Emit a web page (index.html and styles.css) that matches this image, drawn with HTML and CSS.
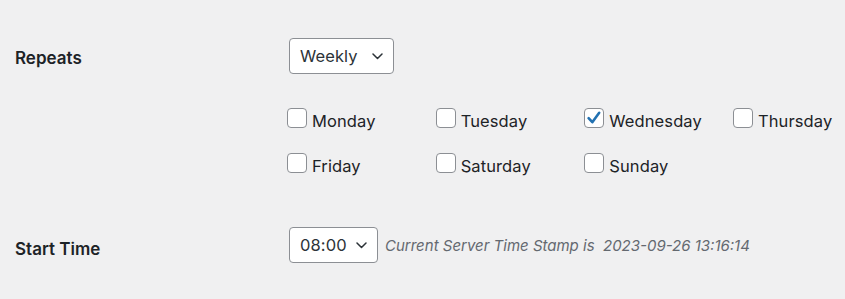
FILE: index.html
```html
<!DOCTYPE html>
<html lang="en">
<head>
<meta charset="utf-8">
<title>Schedule</title>
<link rel="stylesheet" href="styles.css">
</head>
<body>
<div class="form">
  <div class="row row-repeats">
    <div class="label">Repeats</div>
    <div class="field">
      <div class="select select-weekly">
        <span class="select-text">Weekly</span>
        <svg class="chev" width="11" height="7" viewBox="0 0 11 7"><path d="M1 1 L5.5 5.5 L10 1" fill="none" stroke="#2c3338" stroke-width="1.5" stroke-linecap="round" stroke-linejoin="round"/></svg>
      </div>
      <div class="days">
        <label class="day"><span class="box"></span><span class="day-text">Monday</span></label>
        <label class="day"><span class="box"></span><span class="day-text">Tuesday</span></label>
        <label class="day"><span class="box checked"><svg width="20" height="20" viewBox="0 0 20 20"><path d="M4.6 10.2 L8.3 14.2 L15.2 4.8" fill="none" stroke="#2271b1" stroke-width="2.6" stroke-linecap="round" stroke-linejoin="round"/></svg></span><span class="day-text">Wednesday</span></label>
        <label class="day"><span class="box"></span><span class="day-text">Thursday</span></label>
        <label class="day"><span class="box"></span><span class="day-text">Friday</span></label>
        <label class="day"><span class="box"></span><span class="day-text">Saturday</span></label>
        <label class="day"><span class="box"></span><span class="day-text">Sunday</span></label>
      </div>
    </div>
  </div>
  <div class="row row-time">
    <div class="label">Start Time</div>
    <div class="field field-inline">
      <div class="select select-time">
        <span class="select-text">08:00</span>
        <svg class="chev" width="11" height="7" viewBox="0 0 11 7"><path d="M1 1 L5.5 5.5 L10 1" fill="none" stroke="#2c3338" stroke-width="1.5" stroke-linecap="round" stroke-linejoin="round"/></svg>
      </div>
      <span class="stamp">Current Server Time Stamp is&nbsp; 2023-09-26 13:16:14</span>
    </div>
  </div>
</div>
</body>
</html>
```
FILE: styles.css
```css
html, body {
  margin: 0;
  padding: 0;
  background: #f0f0f1;
}
body {
  font-family: Inter, "Noto Sans", "Liberation Sans", sans-serif;
  color: #1d2327;
  width: 845px;
  height: 299px;
  overflow: hidden;
}
.form {
  padding-top: 38px;
  display: flex;
  flex-direction: column;
}
.row {
  display: flex;
  align-items: flex-start;
}
.label {
  flex: none;
  width: 274px;
  padding-left: 15px;
  font-size: 17px;
  font-weight: 600;
  color: #1d2327;
}
.row-repeats .label {
  padding-top: 10px;
}
.row-time {
  margin-top: 54px;
}
.row-time .label {
  padding-top: 12px;
}
.field {
  display: flex;
  flex-direction: column;
  flex: none;
}
.field-inline {
  flex-direction: row;
  align-items: center;
}
.select {
  display: inline-flex;
  align-items: center;
  justify-content: space-between;
  box-sizing: border-box;
  height: 36px;
  background: #fff;
  border: 1px solid #8c8f94;
  border-radius: 4px;
  padding: 0 10px 0 10px;
  font-size: 16.5px;
  color: #2c3338;
}
.select-weekly {
  width: 105px;
  align-self: flex-start;
}
.select-time {
  width: 89px;
}
.select-text {
  letter-spacing: 0.1px;
}
.chev {
  display: block;
}
.days {
  margin-top: 34px;
  margin-left: -2px;
  display: grid;
  grid-template-columns: repeat(4, 148.67px);
  grid-auto-rows: 20px;
  row-gap: 25px;
}
.day {
  display: flex;
  align-items: center;
  white-space: nowrap;
}
.box {
  box-sizing: border-box;
  width: 20px;
  height: 20px;
  flex: none;
  background: #fff;
  border: 1px solid #8c8f94;
  border-radius: 4px;
  position: relative;
}
.box svg {
  position: absolute;
  left: -1px;
  top: -1px;
}
.day-text {
  margin-left: 5px;
  font-size: 16.5px;
  color: #1d2327;
  padding-top: 6px;
  letter-spacing: 0.1px;
}
.stamp {
  margin-left: 7px;
  font-size: 15px;
  font-style: italic;
  color: #646970;
}
```
